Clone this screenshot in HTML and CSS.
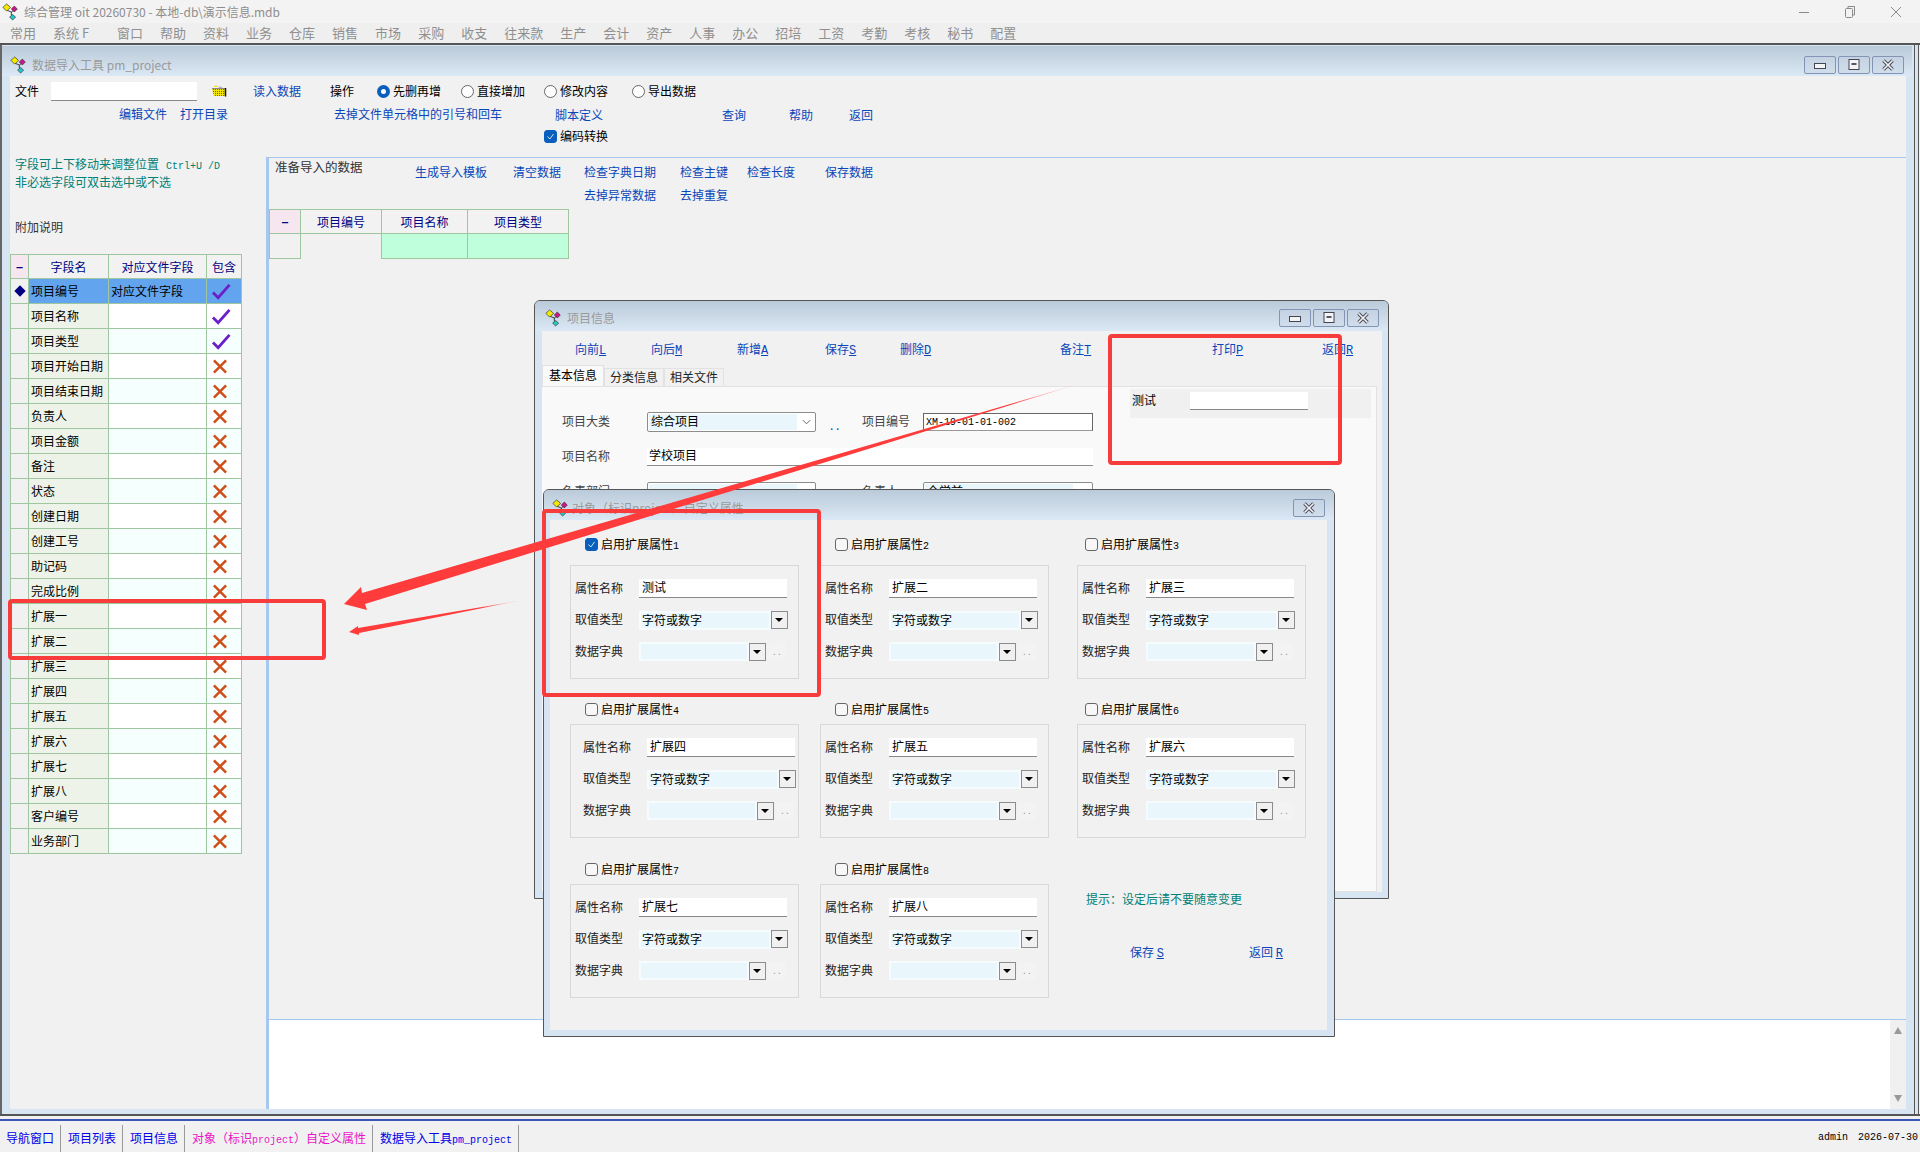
FILE: index.html
```html
<!DOCTYPE html>
<html lang="zh-CN">
<head>
<meta charset="utf-8">
<title>综合管理 oit 20260730</title>
<link rel="stylesheet" href="styles.css">
</head>
<body>
<svg class="defs" width="0" height="0" aria-hidden="true">
  <defs>
    <pattern id="weave" width="2" height="2" patternUnits="userSpaceOnUse">
      <rect width="2" height="2" fill="#f2e400"/>
      <rect width="1" height="1" fill="#6e6a10"/>
    </pattern>
  </defs>
  <symbol id="logo" viewBox="0 0 20 20">
    <path d="M6 8 L11 10 L11 14 M11 10 L15 7" fill="none" stroke="#222" stroke-width="1"/>
    <path d="M5.500 .5 L10 4.500 L5.500 9 L1 4.500Z" fill="#f4e900" stroke="#333" stroke-width=".8"/>
    <path d="M14.500 3 L18 6.500 L14.500 10 L11 6.500Z" fill="#d0148c" stroke="#333" stroke-width=".8"/>
    <path d="M12.500 13 L16 16 L12.500 19.500 L9 16Z" fill="#22c8c8" stroke="#333" stroke-width=".8"/>
  </symbol>
  <symbol id="check" viewBox="0 0 20 18">
    <path d="M1.500 10 L7 15.500 L19 2" fill="none" stroke="#6a1fc9" stroke-width="3"/>
  </symbol>
  <symbol id="cross" viewBox="0 0 16 16">
    <path d="M1 1 L15 15 M15 1 L1 15" fill="none" stroke="#cf4f1b" stroke-width="3"/>
  </symbol>
  <symbol id="wmin" viewBox="0 0 12 12"><rect x=".5" y="4.500" width="11" height="5" fill="#f4f4f4" stroke="#445"/></symbol>
  <symbol id="wmax" viewBox="0 0 12 12"><rect x="1" y=".5" width="10" height="10" fill="#f4f4f4" stroke="#445"/><rect x="3.500" y="4" width="5" height="2" fill="#556"/></symbol>
  <symbol id="wclose" viewBox="0 0 12 12"><path d="M1.500 1.500 L10.500 10.500 M10.500 1.500 L1.500 10.500" stroke="#445" stroke-width="3.400"/><path d="M1.500 1.500 L10.500 10.500 M10.500 1.500 L1.500 10.500" stroke="#f4f4f4" stroke-width="1.600"/></symbol>
</svg>

<div class="app">
  <header class="titlebar">
    <svg class="logo"><use href="#logo"/></svg>
    <span class="apptitle">综合管理 oit 20260730 - 本地-db\演示信息.mdb</span>
    <div class="syscontrols">
      <svg width="12" height="12" viewBox="0 0 12 12"><path d="M1 6.500H11" stroke="#8a8a8a"/></svg>
      <svg width="12" height="14" viewBox="0 0 12 14"><rect x="1.500" y="3.500" width="7" height="9" rx="1" fill="none" stroke="#8a8a8a"/><path d="M4 3.500V1.500H10.500V10H8.500" fill="none" stroke="#8a8a8a"/></svg>
      <svg width="12" height="12" viewBox="0 0 12 12"><path d="M1 1 L11 11 M11 1 L1 11" stroke="#8a8a8a"/></svg>
    </div>
  </header>
  <nav class="menubar">
    <span>常用</span><span class="wide">系统 F</span><span>窗口</span><span>帮助</span><span>资料</span><span>业务</span><span>仓库</span><span>销售</span><span>市场</span><span>采购</span><span>收支</span><span>往来款</span><span>生产</span><span>会计</span><span>资产</span><span>人事</span><span>办公</span><span>招培</span><span>工资</span><span>考勤</span><span>考核</span><span>秘书</span><span>配置</span>
  </nav>

  <section class="mdi">
    <div class="wintitle">
      <svg class="wlogo"><use href="#logo"/></svg>
      <span class="wname">数据导入工具 pm_project</span>
      <div class="wbtns">
        <span class="wbtn"><svg><use href="#wmin"/></svg></span>
        <span class="wbtn"><svg><use href="#wmax"/></svg></span>
        <span class="wbtn"><svg><use href="#wclose"/></svg></span>
      </div>
    </div>
    <div class="mdibody">
      <div class="toolbar">
        <div class="tb1">
          <span class="blk">文件</span>
          <div class="fileinput"></div>
          <svg class="folder" viewBox="0 0 16 12"><path d="M3 2 C4 0 6 0 7 2Z" fill="#f2e400"/><path d="M7 3 L9 1 L12 3Z" fill="#b9b9b9"/><path d="M1 3.500 H14" stroke="#8a8a8a"/><path d="M1 4 H14 V11 H3Z" fill="url(#weave)"/><path d="M14.500 3 V11.500" stroke="#111" stroke-width="1.500"/></svg>
          <a class="lnk">读入数据</a>
          <span class="blk">操作</span>
          <label class="opt"><input type="radio" name="op" checked><span>先删再增</span></label>
          <label class="opt"><input type="radio" name="op"><span>直接增加</span></label>
          <label class="opt"><input type="radio" name="op"><span>修改内容</span></label>
          <label class="opt"><input type="radio" name="op"><span>导出数据</span></label>
        </div>
        <div class="tb2">
          <a class="lnk">编辑文件</a><a class="lnk">打开目录</a><a class="lnk">去掉文件单元格中的引号和回车</a><a class="lnk low">脚本定义</a><a class="lnk low">查询</a><a class="lnk low">帮助</a><a class="lnk low">返回</a>
        </div>
        <div class="tb3"><label class="opt"><input type="checkbox" checked><span>编码转换</span></label></div>
      </div>

      <div class="split">
        <aside class="leftcol">
          <p class="tip">字段可上下移动来调整位置<span class="lat ctrl">Ctrl+U /D</span></p>
          <p class="tip second">非必选字段可双击选中或不选</p>
          <p class="note">附加说明</p>
          <table class="fields">
            <thead><tr><th class="ind">−</th><th>字段名</th><th>对应文件字段</th><th>包含</th></tr></thead>
            <tbody>
              <tr class="sel"><td class="ind"><span class="diamond"></span></td><td>项目编号</td><td>对应文件字段</td><td><svg class="ck"><use href="#check"/></svg></td></tr>
              <tr><td class="ind"></td><td>项目名称</td><td></td><td><svg class="ck"><use href="#check"/></svg></td></tr>
              <tr><td class="ind"></td><td>项目类型</td><td></td><td><svg class="ck"><use href="#check"/></svg></td></tr>
              <tr><td class="ind"></td><td>项目开始日期</td><td></td><td><svg class="xx"><use href="#cross"/></svg></td></tr>
              <tr><td class="ind"></td><td>项目结束日期</td><td></td><td><svg class="xx"><use href="#cross"/></svg></td></tr>
              <tr><td class="ind"></td><td>负责人</td><td></td><td><svg class="xx"><use href="#cross"/></svg></td></tr>
              <tr><td class="ind"></td><td>项目金额</td><td></td><td><svg class="xx"><use href="#cross"/></svg></td></tr>
              <tr><td class="ind"></td><td>备注</td><td></td><td><svg class="xx"><use href="#cross"/></svg></td></tr>
              <tr><td class="ind"></td><td>状态</td><td></td><td><svg class="xx"><use href="#cross"/></svg></td></tr>
              <tr><td class="ind"></td><td>创建日期</td><td></td><td><svg class="xx"><use href="#cross"/></svg></td></tr>
              <tr><td class="ind"></td><td>创建工号</td><td></td><td><svg class="xx"><use href="#cross"/></svg></td></tr>
              <tr><td class="ind"></td><td>助记码</td><td></td><td><svg class="xx"><use href="#cross"/></svg></td></tr>
              <tr><td class="ind"></td><td>完成比例</td><td></td><td><svg class="xx"><use href="#cross"/></svg></td></tr>
              <tr><td class="ind"></td><td>扩展一</td><td></td><td><svg class="xx"><use href="#cross"/></svg></td></tr>
              <tr><td class="ind"></td><td>扩展二</td><td></td><td><svg class="xx"><use href="#cross"/></svg></td></tr>
              <tr><td class="ind"></td><td>扩展三</td><td></td><td><svg class="xx"><use href="#cross"/></svg></td></tr>
              <tr><td class="ind"></td><td>扩展四</td><td></td><td><svg class="xx"><use href="#cross"/></svg></td></tr>
              <tr><td class="ind"></td><td>扩展五</td><td></td><td><svg class="xx"><use href="#cross"/></svg></td></tr>
              <tr><td class="ind"></td><td>扩展六</td><td></td><td><svg class="xx"><use href="#cross"/></svg></td></tr>
              <tr><td class="ind"></td><td>扩展七</td><td></td><td><svg class="xx"><use href="#cross"/></svg></td></tr>
              <tr><td class="ind"></td><td>扩展八</td><td></td><td><svg class="xx"><use href="#cross"/></svg></td></tr>
              <tr><td class="ind"></td><td>客户编号</td><td></td><td><svg class="xx"><use href="#cross"/></svg></td></tr>
              <tr><td class="ind"></td><td>业务部门</td><td></td><td><svg class="xx"><use href="#cross"/></svg></td></tr>
            </tbody>
          </table>
        </aside>

        <div class="rightcol">
          <div class="rhead">
            <span class="rname">准备导入的数据</span>
            <a class="lnk">生成导入模板</a><a class="lnk">清空数据</a><a class="lnk">检查字典日期</a><a class="lnk">检查主键</a><a class="lnk">检查长度</a><a class="lnk">保存数据</a>
            <a class="lnk r2c4">去掉异常数据</a><a class="lnk">去掉重复</a>
          </div>
          <table class="preview">
            <thead><tr><th class="ind">−</th><th>项目编号</th><th>项目名称</th><th>项目类型</th></tr></thead>
            <tbody><tr><td class="ind"></td><td class="plain"></td><td class="mint"></td><td class="mint"></td></tr></tbody>
          </table>
          <div class="spacer"></div>
          <div class="logarea">
            <div class="logtext"></div>
            <div class="vscroll"><span class="up"></span><span class="down"></span></div>
          </div>
        </div>
      </div>
    </div>
  </section>

  <footer class="taskbar">
    <span class="task">导航窗口</span>
    <span class="task">项目列表</span>
    <span class="task">项目信息</span>
    <span class="task active">对象（标识<span class="lat">project</span>）自定义属性</span>
    <span class="task">数据导入工具<span class="lat">pm_project</span></span>
    <span class="status lat"><span>admin</span><span>2026-07-30</span></span>
  </footer>
</div>

<section class="childwin info">
  <div class="wintitle">
    <svg class="wlogo"><use href="#logo"/></svg>
    <span class="wname">项目信息</span>
    <div class="wbtns">
      <span class="wbtn"><svg><use href="#wmin"/></svg></span>
      <span class="wbtn"><svg><use href="#wmax"/></svg></span>
      <span class="wbtn"><svg><use href="#wclose"/></svg></span>
    </div>
  </div>
  <div class="infobody">
    <div class="infotools">
      <a class="lnk">向前<u class="lat">L</u></a><a class="lnk">向后<u class="lat">M</u></a><a class="lnk">新增<u class="lat">A</u></a><a class="lnk">保存<u class="lat">S</u></a><a class="lnk">删除<u class="lat">D</u></a><a class="lnk">备注<u class="lat">T</u></a><a class="lnk">打印<u class="lat">P</u></a><a class="lnk">返回<u class="lat">R</u></a>
    </div>
    <div class="tabs">
      <span class="tab current">基本信息</span><span class="tab">分类信息</span><span class="tab">相关文件</span>
    </div>
    <div class="tabpage">
      <div class="form">
        <span class="dim">项目大类</span>
        <div class="combo"><span class="comboval">综合项目</span><svg class="chev" viewBox="0 0 10 6"><path d="M1 1 L5 5 L9 1" fill="none" stroke="#555"/></svg></div>
        <span class="dots">. .</span>
        <span class="dim">项目编号</span>
        <div class="textbox dark"><span class="lat">XM-19-01-01-002</span></div>
        <span class="dim">项目名称</span>
        <div class="textbox wide3">学校项目</div>
        <span class="dim">负责部门</span>
        <div class="combo"><span class="comboval"></span><svg class="chev" viewBox="0 0 10 6"><path d="M1 1 L5 5 L9 1" fill="none" stroke="#555"/></svg></div>
        <span></span>
        <span class="dim">负责人</span>
        <div class="combo"><span class="comboval">全学前</span><svg class="chev" viewBox="0 0 10 6"><path d="M1 1 L5 5 L9 1" fill="none" stroke="#555"/></svg></div>
      </div>
      <div class="strip"><span class="blk striplabel">测试</span><div class="stripinput"></div></div>
    </div>
  </div>
</section>

<section class="childwin dialog">
  <div class="wintitle">
    <svg class="wlogo"><use href="#logo"/></svg>
    <span class="wname">对象（标识project）自定义属性</span>
    <div class="wbtns"><span class="wbtn"><svg><use href="#wclose"/></svg></span></div>
  </div>
  <div class="dlgbody">
    <div class="attr">
      <label class="opt head first"><input type="checkbox" checked><span>启用扩展属性<span class="lat">1</span></span></label>
      <div class="attrbox">
        <span>属性名称</span><div class="in">测试</div>
        <span>取值类型</span><div class="sel1"><span class="val">字符或数字</span><span class="drop"></span></div>
        <span>数据字典</span><div class="sel2"><span class="val"></span><span class="drop"></span><span class="more">. .</span></div>
      </div>
    </div>
    <div class="attr">
      <label class="opt head first"><input type="checkbox"><span>启用扩展属性<span class="lat">2</span></span></label>
      <div class="attrbox">
        <span>属性名称</span><div class="in">扩展二</div>
        <span>取值类型</span><div class="sel1"><span class="val">字符或数字</span><span class="drop"></span></div>
        <span>数据字典</span><div class="sel2"><span class="val"></span><span class="drop"></span><span class="more">. .</span></div>
      </div>
    </div>
    <div class="attr">
      <label class="opt head first"><input type="checkbox"><span>启用扩展属性<span class="lat">3</span></span></label>
      <div class="attrbox">
        <span>属性名称</span><div class="in">扩展三</div>
        <span>取值类型</span><div class="sel1"><span class="val">字符或数字</span><span class="drop"></span></div>
        <span>数据字典</span><div class="sel2"><span class="val"></span><span class="drop"></span><span class="more">. .</span></div>
      </div>
    </div>
    <div class="attr">
      <label class="opt head"><input type="checkbox"><span>启用扩展属性<span class="lat">4</span></span></label>
      <div class="attrbox shift">
        <span>属性名称</span><div class="in">扩展四</div>
        <span>取值类型</span><div class="sel1"><span class="val">字符或数字</span><span class="drop"></span></div>
        <span>数据字典</span><div class="sel2"><span class="val"></span><span class="drop"></span><span class="more">. .</span></div>
      </div>
    </div>
    <div class="attr">
      <label class="opt head"><input type="checkbox"><span>启用扩展属性<span class="lat">5</span></span></label>
      <div class="attrbox">
        <span>属性名称</span><div class="in">扩展五</div>
        <span>取值类型</span><div class="sel1"><span class="val">字符或数字</span><span class="drop"></span></div>
        <span>数据字典</span><div class="sel2"><span class="val"></span><span class="drop"></span><span class="more">. .</span></div>
      </div>
    </div>
    <div class="attr">
      <label class="opt head"><input type="checkbox"><span>启用扩展属性<span class="lat">6</span></span></label>
      <div class="attrbox">
        <span>属性名称</span><div class="in">扩展六</div>
        <span>取值类型</span><div class="sel1"><span class="val">字符或数字</span><span class="drop"></span></div>
        <span>数据字典</span><div class="sel2"><span class="val"></span><span class="drop"></span><span class="more">. .</span></div>
      </div>
    </div>
    <div class="attr">
      <label class="opt head"><input type="checkbox"><span>启用扩展属性<span class="lat">7</span></span></label>
      <div class="attrbox">
        <span>属性名称</span><div class="in">扩展七</div>
        <span>取值类型</span><div class="sel1"><span class="val">字符或数字</span><span class="drop"></span></div>
        <span>数据字典</span><div class="sel2"><span class="val"></span><span class="drop"></span><span class="more">. .</span></div>
      </div>
    </div>
    <div class="attr">
      <label class="opt head"><input type="checkbox"><span>启用扩展属性<span class="lat">8</span></span></label>
      <div class="attrbox">
        <span>属性名称</span><div class="in">扩展八</div>
        <span>取值类型</span><div class="sel1"><span class="val">字符或数字</span><span class="drop"></span></div>
        <span>数据字典</span><div class="sel2"><span class="val"></span><span class="drop"></span><span class="more">. .</span></div>
      </div>
    </div>
    <div class="hintcell">
      <p class="hint">提示：设定后请不要随意变更</p>
      <div class="actions"><a class="lnk">保存 <u class="lat">S</u></a><a class="lnk">返回 <u class="lat">R</u></a></div>
    </div>
  </div>
</section>

<svg class="annot" viewBox="0 0 1920 1152" aria-hidden="true">
  <defs>
    <linearGradient id="fade1" gradientUnits="userSpaceOnUse" x1="1082" y1="383" x2="1010" y2="404">
      <stop offset="0" stop-color="#ff3b3b" stop-opacity="0"/>
      <stop offset="1" stop-color="#ff3b3b"/>
    </linearGradient>
    <linearGradient id="fade2" gradientUnits="userSpaceOnUse" x1="523" y1="600" x2="480" y2="607">
      <stop offset="0" stop-color="#ff3b3b" stop-opacity="0"/>
      <stop offset="1" stop-color="#ff3b3b"/>
    </linearGradient>
  </defs>
  <rect class="mark" x="1110" y="336" width="230" height="127" rx="2"/>
  <rect class="mark" x="544" y="511" width="275" height="184" rx="2"/>
  <rect class="mark" x="10" y="601" width="314" height="57" rx="2"/>
  <polygon points="1082,383 362,593 361,587 344,604 367,610 365,604" fill="url(#fade1)"/>
  <polygon points="523,600 358,628 358,626 349,632 359,635 359,633" fill="url(#fade2)"/>
</svg>
</body>
</html>
```

FILE: styles.css
```css
* { box-sizing: border-box; }
html, body { margin: 0; padding: 0; }
body {
  width: 1920px;
  height: 1152px;
  overflow: hidden;
  position: relative;
  background: #f1f1f1;
  font: 12px/14px "Noto Sans CJK SC", "Liberation Sans", sans-serif;
  color: #111;
}
p { margin: 0; }
.defs { position: absolute; }
.lat { font-family: "Liberation Mono", monospace; font-size: 10px; line-height: 1; }
u.lat { font-size: 12px; }
.lnk { color: #0a46b8; white-space: nowrap; }
.blk { color: #000; }
.dim { color: #444; }

.app { display: flex; flex-direction: column; height: 1152px; }

.titlebar { height: 23px; display: flex; align-items: center; background: #f3f3f3; padding-left: 2px; }
.logo { width: 17px; height: 20px; }
.apptitle { margin-left: 5px; color: #8e8e8e; }
.syscontrols { margin-left: auto; display: flex; align-items: center; gap: 34px; padding-right: 18px; }

.menubar { height: 20px; display: flex; gap: 17px; padding-left: 10px; align-items: center; background: #efefef; color: #8f8f8f; font-size: 13px; }
.menubar .wide { min-width: 47px; }

.mdi {
  flex: 1;
  display: flex;
  flex-direction: column;
  min-height: 0;
  margin-bottom: 2px;
  border-top: 2px solid #555;
  border-bottom: 2px solid #3a55b5;
  background: #d7e4f2;
  box-shadow: inset 0 -3px 0 #f1f1f1, inset 0 -5px 0 #555, inset 2px 0 0 #666, inset -1px 0 0 #f1f1f1, inset -2px 0 0 #555, inset -5px 0 0 #d7e4f2, inset -6px 0 0 #555;
}
.mdibody {
  flex: none;
  height: 1033px;
  margin: 0 14px 0 10px;
  display: flex;
  flex-direction: column;
  background: #f1f1f1;
}

.wintitle {
  height: 30px;
  flex: none;
  display: flex;
  align-items: center;
  background: linear-gradient(#bbcad9, #dbe8f5);
  padding: 3px 9px 0 10px;
}
.mdi > .wintitle { margin: 1px 8px 0 2px; padding: 7px 8px 0 8px; }
.wlogo { width: 17px; height: 20px; }
.wname { margin-left: 5px; color: #9a9a9a; }
.dialog .wintitle { padding-left: 8px; padding-top: 5px; }
.dialog .wname { margin-left: 3px; }
.wbtns { margin-left: auto; display: flex; gap: 2px; }
.wbtn {
  width: 32px;
  height: 18px;
  display: flex;
  align-items: center;
  justify-content: center;
  border: 1px solid #8494b4;
  border-radius: 2px;
  background: linear-gradient(#c4d2e2, #d0ddeb);
}
.wbtn svg { width: 12px; height: 12px; }

.toolbar { height: 81px; flex: none; }
.tb1 {
  height: 30px;
  padding-left: 5px;
  display: grid;
  grid-template-columns: 36px 160px 42px 77px 47px 84px 83px 88px 1fr;
  align-items: center;
}
.fileinput { width: 146px; height: 19px; background: #fff; border-bottom: 1px solid #888; }
.folder { width: 16px; height: 12px; }
.opt { display: flex; align-items: center; gap: 3px; color: #000; }
.opt input {
  appearance: none;
  margin: 0;
  width: 13px;
  height: 13px;
  flex: none;
  background: #fff;
  border: 1px solid #666;
}
.opt input[type=radio] { border-radius: 50%; }
.opt input[type=radio]:checked { border: 4px solid #0a5fbd; }
.opt input[type=checkbox] { border-radius: 3px; background: #f7f7f7; }
.opt input[type=checkbox]:checked {
  border-color: #0a5fbd;
  background: #0a5fbd url("data:image/svg+xml,%3Csvg xmlns='http://www.w3.org/2000/svg' viewBox='0 0 11 11'%3E%3Cpath d='M2.500 5.500 L4.800 8 L8.500 3' fill='none' stroke='%23cfe3f7' stroke-width='1'/%3E%3C/svg%3E") center / 11px 11px no-repeat;
}
.tb2 {
  height: 16px;
  padding-left: 109px;
  display: grid;
  grid-template-columns: 61px 154px 221px 167px 67px 60px 1fr;
  align-items: center;
}
.low { position: relative; top: 1px; }
.tb3 { padding: 7px 0 0 534px; }

.split { flex: 1; display: flex; min-height: 0; }
.leftcol { width: 256px; flex: none; }
.tip { color: #008076; padding-left: 5px; height: 14px; }
.ctrl { margin-left: 7px; }
.second { margin-top: 4px; }
.note { margin: 31px 0 20px; padding-left: 5px; color: #333; }

table { border-collapse: collapse; table-layout: fixed; }
.fields { width: 231px; }
.fields th, .fields td, .preview th, .preview td {
  border: 1px solid #9fc79f;
  padding: 0;
  font-weight: normal;
  overflow: hidden;
  white-space: nowrap;
}
.fields th { height: 24px; background: #f2f2f2; color: #000080; text-align: center; }
.fields td { height: 25px; background: #fff; padding-left: 2px; color: #000; }
.fields th:nth-child(1) { width: 18px; }
.fields th:nth-child(2) { width: 80px; }
.fields th:nth-child(3) { width: 98px; }
.fields th:nth-child(4) { width: 35px; }
.fields td:nth-child(2) { background: #eef3e9; }
.fields tr:nth-child(odd) td:nth-child(n+3) { background: #f4fffe; }
.fields tr:nth-child(even) td:nth-child(n+3) { background: #fff; }
.fields th.ind, .preview th.ind { background: #f6e6f0; color: #000080; font-weight: bold; }
.fields td.ind { background: #f1f1f1; padding: 0; text-align: center; }
.fields tr.sel td:nth-child(n+2) { background: #62a5ee; }
.fields td:last-child { padding: 0 0 0 4px; }
.diamond { display: inline-block; width: 8px; height: 8px; background: #000080; transform: rotate(45deg); vertical-align: 1px; }
.ck { width: 20px; height: 17px; display: block; }
.xx { width: 14px; height: 15px; display: block; margin-left: 2px; }

.rightcol { flex: 1; display: flex; flex-direction: column; border-left: 3px solid #a6c8ef; border-top: 1px solid #a6c8ef; }
.rhead {
  height: 51px;
  flex: none;
  padding: 6px 0 0 6px;
  display: grid;
  grid-template-columns: 140px 98px 71px 96px 67px 78px 1fr;
  grid-auto-rows: 16px;
  row-gap: 7px;
  align-items: center;
}
.rname { color: #333; font-size: 12.500px; margin-top: -10px; }
.r2c4 { grid-column: 4; }
.preview { width: 299px; margin-bottom: 0; }
.preview th { height: 24px; background: #f2f2f2; color: #000080; text-align: center; }
.preview td { height: 25px; }
.preview th:nth-child(1) { width: 31px; }
.preview th:nth-child(2) { width: 81px; }
.preview th:nth-child(3) { width: 86px; }
.preview th:nth-child(4) { width: 101px; }
.preview td.plain { border-bottom: none; background: #f1f1f1; }
.preview td.mint { background: #bfffdb; }
.spacer { flex: 1; }
.logarea { height: 90px; flex: none; display: flex; border-top: 1px solid #a6c8ef; background: #fff; }
.logtext { flex: 1; }
.vscroll { width: 16px; background: #f0f0f0; display: flex; flex-direction: column; justify-content: space-between; align-items: center; padding: 7px 0; }
.up, .down { width: 0; height: 0; border-left: 4px solid transparent; border-right: 4px solid transparent; }
.up { border-bottom: 7px solid #999; }
.down { border-top: 7px solid #999; }

.taskbar { height: 29px; flex: none; display: flex; align-items: flex-end; background: #f1f1f1; overflow: hidden; }
.task { height: 27px; line-height: 26px; padding: 0 6px 0 7px; border-right: 1px solid #999; color: #0000e6; white-space: nowrap; }
.task:first-child { padding-left: 6px; }
.task.active { color: #e815c8; }
.status { margin-left: auto; height: 27px; line-height: 26px; display: flex; gap: 10px; width: 102px; flex: none; color: #000; white-space: nowrap; }

.childwin {
  position: absolute;
  display: flex;
  flex-direction: column;
  background: #d7e4f2;
  border: 1px solid #555;
  border-radius: 6px 6px 0 0;
  overflow: hidden;
}
.info { left: 534px; top: 300px; width: 855px; height: 599px; }
.dialog { left: 543px; top: 489px; width: 792px; height: 548px; }

.infobody { margin: 0 6px 6px 7px; flex: 1; min-height: 0; display: flex; flex-direction: column; background: #f1f1f1; }
.infotools {
  height: 34px;
  flex: none;
  padding: 3px 0 0 33px;
  display: grid;
  grid-template-columns: 76px 86px 88px 75px 160px 152px 110px 1fr;
  align-items: center;
}
.lnk u { text-underline-offset: 1px; }
.tabs { height: 21px; flex: none; display: flex; align-items: flex-end; }
.tab { height: 18px; line-height: 15px; padding: 0 5px; border: 1px solid #e2e2e2; border-bottom: none; color: #222; background: #f1f1f1; }
.tab.current { height: 21px; line-height: 17px; padding: 0 6px 0 6px; width: 62px; background: #f9f9f9; color: #000; }
.tabpage { flex: 1; min-height: 0; margin-right: 5px; display: flex; background: #f9f9f9; border: 1px solid #e2e2e2; border-width: 1px 1px 1px 0; }
.form {
  width: 588px;
  flex: none;
  padding: 25px 0 0 20px;
  display: grid;
  grid-template-columns: 85px 169px 46px 61px 170px;
  grid-template-rows: 20px 18px 20px;
  row-gap: 16px;
  align-items: center;
}
.form .dim { margin-top: -2px; }
.combo { height: 20px; display: flex; align-items: center; background: #fff; border: 1px solid #8c8c8c; border-radius: 2px; padding: 1px; }
.comboval { width: 148px; height: 100%; background: #e9f6fb; line-height: 13px; padding-left: 2px; color: #000; }
.chev { width: 9px; height: 6px; margin-left: 5px; }
.dots { color: #0a46b8; padding-left: 14px; align-self: end; }
.textbox { height: 18px; line-height: 14px; background: #fff; border-bottom: 1px solid #8c8c8c; padding-left: 2px; color: #000; }
.textbox.dark { border: 1px solid #666; border-bottom-color: #999; line-height: 12px; }
.wide3 { grid-column: 2 / span 4; }
.strip { width: 241px; height: 29px; margin-top: 2px; padding: 3px 0 0 2px; display: flex; align-items: flex-start; gap: 34px; background: #f0f0f0; }
.striplabel { margin-top: 1px; }
.stripinput { width: 118px; height: 18px; background: #fff; border-bottom: 1px solid #888; }

.dlgbody {
  margin: 0 7px 6px 6px;
  flex: 1;
  min-height: 0;
  padding: 17px 0 0 20px;
  background: #f1f1f1;
  display: grid;
  grid-template-columns: 250px 257px 1fr;
  grid-template-rows: 165px 160px 1fr;
}
.head { height: 14px; margin: 0 0 8px 15px; }
.head.first { margin-bottom: 14px; }
.attr:nth-child(3n) .head { margin-left: 8px; }
.attrbox {
  width: 229px;
  height: 114px;
  border: 1px solid #d8d8d8;
  padding: 13px 0 0 4px;
  display: grid;
  grid-template-columns: 64px 1fr;
  grid-auto-rows: 19px;
  row-gap: 12.500px;
  align-items: center;
  color: #222;
}
.attrbox > span { margin-top: -2px; }
.attrbox.shift { padding-left: 12px; }
.in { width: 148px; height: 19px; line-height: 15px; background: #fff; border-bottom: 1px solid #888; padding-left: 3px; color: #000; }
.sel1, .sel2 { display: flex; align-items: center; height: 19px; color: #000; }
.val { display: block; height: 19px; line-height: 13px; background: #e9f6fb; border: 2px solid #f6fbfd; padding-left: 1px; }
.sel1 .val { width: 132px; }
.sel2 .val { width: 110px; }
.drop { position: relative; width: 17px; height: 18px; flex: none; background: #f0f0f0; border: 1px solid #8c8c8c; }
.drop::after { content: ""; position: absolute; left: 3px; top: 6px; border-left: 4px solid transparent; border-right: 4px solid transparent; border-top: 4px solid #000; }
.more { width: 18px; height: 17px; margin-left: 2px; background: #f3f3f3; border-radius: 3px; color: #999; text-align: center; font-size: 10px; line-height: 16px; }
.hintcell { padding-left: 9px; }
.hint { margin-top: 30px; color: #008076; }
.actions { margin-top: 39px; padding-left: 44px; display: grid; grid-template-columns: 119px 119px; }

.annot { position: absolute; left: 0; top: 0; width: 1920px; height: 1152px; pointer-events: none; }
.mark { fill: none; stroke: #f83c3c; stroke-width: 4; }
```
